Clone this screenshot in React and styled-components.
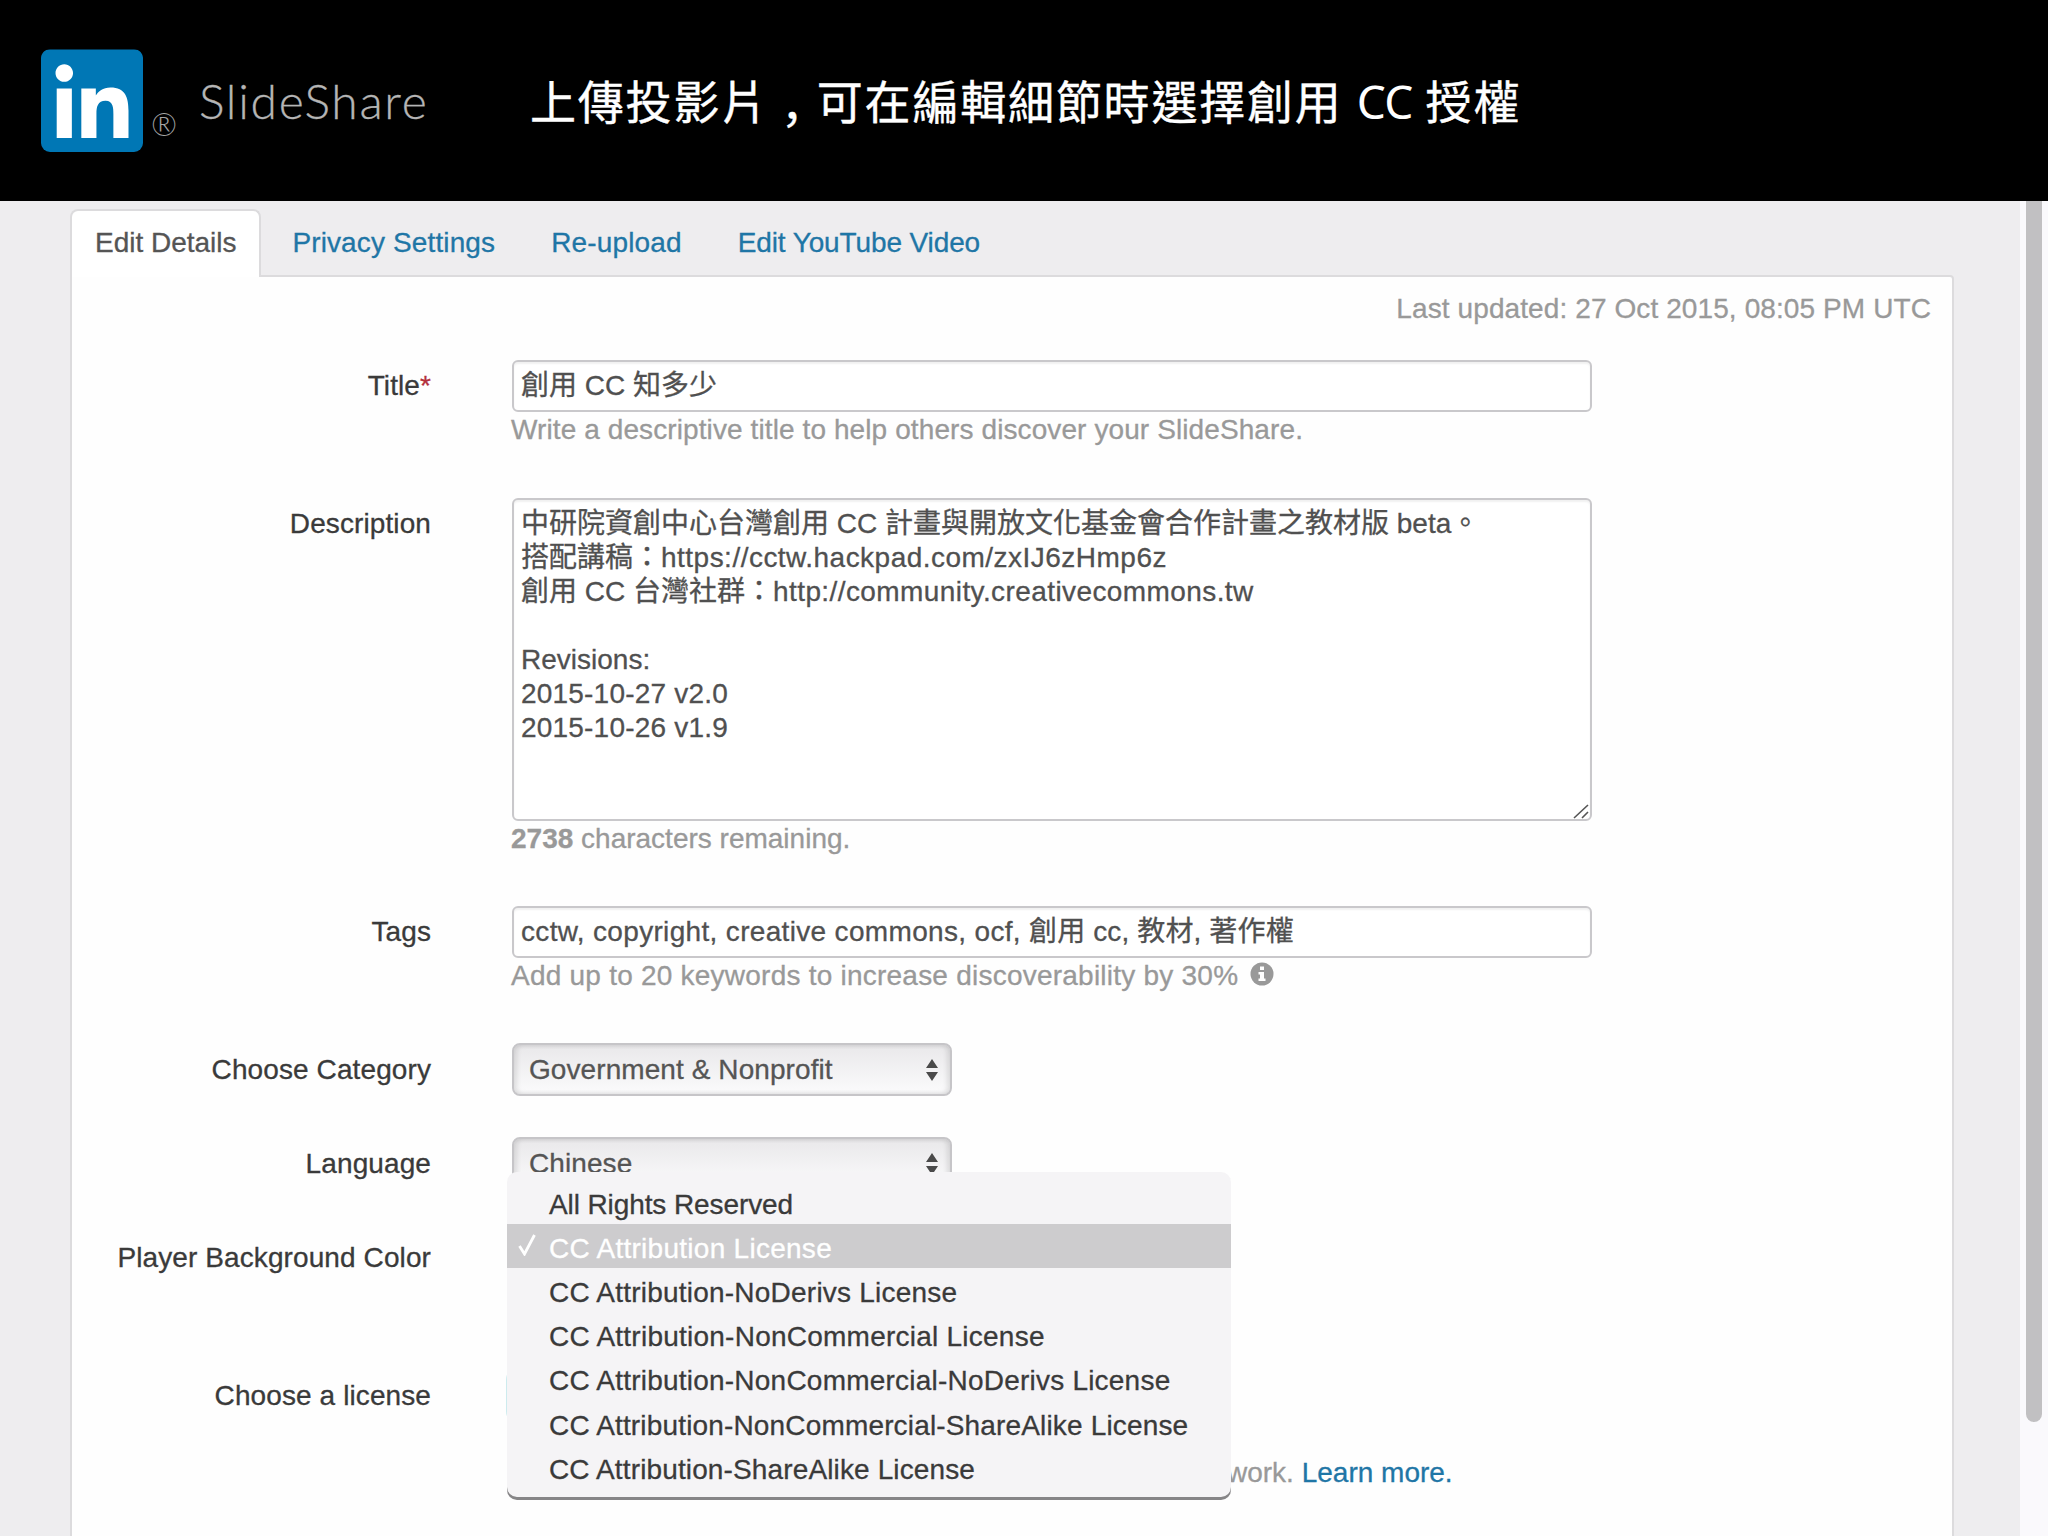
import React from "react";
import styled, { createGlobalStyle } from "styled-components";
import { FaLinkedin } from "react-icons/fa";

const GlobalStyle = createGlobalStyle`
  * {
    box-sizing: border-box;
  }

  body {
    margin: 0;
    overflow: hidden;
    background-color: #eeedef;
    font-family: "Liberation Sans", "Noto Sans CJK TC", sans-serif;
    font-size: 28px;
    line-height: 34px;
    color: #3a3a3a;
    -webkit-text-stroke: 0.3px currentColor;
  }
`;

const Page = styled.div`
  display: flex;
  flex-direction: column;
  height: 1536px;
  overflow: hidden;
`;

const Header = styled.header`
  display: flex;
  flex: none;
  align-items: flex-start;
  height: 201px;
  padding: 49px 0 0 41px;
  background-color: #000;
`;

const LogoMark = styled.div`
  display: flex;
  align-items: center;
  width: 102px;
  height: 103px;
  overflow: hidden;
  border-radius: 9px;
  background: linear-gradient(#fff, #fff) center / 84% 84% no-repeat;

  svg {
    flex: none;
    width: 102px;
    height: 118px;
    color: #0077b5;
  }
`;

const Registered = styled.span`
  margin: 58px 0 0 8px;
  width: 25px;
  font-family: Lato, sans-serif;
  font-weight: 300;
  font-size: 31px;
  line-height: 34px;
  color: #a5a5a5;
  -webkit-text-stroke: 0;
`;

const Brand = styled.span`
  width: 330px;
  margin: 22px 0 0 23px;
  font-family: Lato, sans-serif;
  font-weight: 300;
  font-size: 48px;
  line-height: 60px;
  letter-spacing: 1.7px;
  color: #b5b5b5;
`;

const Heading = styled.h1`
  margin: 22px 0 0 1px;
  font-family: "Noto Sans", "Noto Sans CJK TC", sans-serif;
  font-weight: 400;
  font-size: 46px;
  line-height: 60px;
  letter-spacing: 1.8px;
  white-space: nowrap;
  color: #fff;
  -webkit-text-stroke: 0.4px #fff;
`;

const Comma = styled.span`
  vertical-align: -17px;
  line-height: 0;
`;

const Latin = styled.span`
  margin: 0 2px 0 3px;
  letter-spacing: -0.8px;
  -webkit-text-stroke: 0;
`;

const Browser = styled.div`
  display: flex;
  flex: 1;
  min-height: 0;
`;

const Content = styled.main`
  flex: 1;
  padding: 8px 66px 0 70px;
`;

const Tabs = styled.nav`
  display: flex;
  gap: 6px;
  height: 66px;
`;

const Tab = styled.a`
  position: relative;
  z-index: 1;
  height: 68px;
  padding: 15px 23px 0;
  border: 2px solid ${({ $active }) => ($active ? "#dcdbdd" : "transparent")};
  border-bottom: 0;
  border-radius: 8px 8px 0 0;
  background-color: ${({ $active }) => ($active ? "#fff" : "transparent")};
  letter-spacing: ${({ $tracking }) => $tracking}px;
  color: ${({ $active }) => ($active ? "#555" : "#1f76a6")};
`;

const Panel = styled.section`
  height: 1400px;
  padding: 15px 21px 0 1px;
  border: 2px solid #dcdbdd;
  border-radius: 0 4px 0 0;
  background-color: #fefefe;
`;

const Updated = styled.p`
  margin: 0;
  text-align: right;
  letter-spacing: 0.1px;
  color: #999;
`;

const Row = styled.div`
  display: flex;
  align-items: flex-start;
  margin-top: ${({ $gap }) => $gap}px;
  min-height: ${({ $height }) => ($height ? `${$height}px` : "0")};
`;

const Label = styled.label`
  width: 358px;
  padding-top: ${({ $select }) => ($select ? 10 : 9)}px;
  margin-right: 81px;
  text-align: right;
  letter-spacing: 0.1px;
`;

const Required = styled.span`
  color: #b3303c;
`;

const Field = styled.div`
  position: relative;
  width: 1080px;
`;

const TextBox = styled.div`
  position: relative;
  height: ${({ $height }) => $height || 52}px;
  padding: 7px;
  border: 2px solid #c9c8cb;
  border-radius: 6px;
  background-color: #fff;
  box-shadow: inset 0 2px 2px rgba(0, 0, 0, 0.06);
  white-space: pre-wrap;
  color: #505050;
`;

const Tracked = styled.span`
  letter-spacing: ${({ $by }) => $by}px;
`;

const Grip = styled.svg`
  position: absolute;
  right: 1px;
  bottom: 0;
`;

const Hint = styled.p`
  display: flex;
  align-items: center;
  margin: 0 0 0 -1px;
  padding-top: 1px;
  height: 34px;
  white-space: pre;
  letter-spacing: ${({ $tracking }) => $tracking || 0}px;
  color: #999;
`;

const InfoIcon = styled.svg`
  margin: -4px 0 0 12px;
`;

const SelectBox = styled.div`
  display: flex;
  justify-content: space-between;
  width: 440px;
  height: 53px;
  padding: 8px 12px 0 15px;
  border: 2px solid #c6c5c8;
  border-radius: 8px;
  background: linear-gradient(#e9e8ea, #fbfbfc);
  box-shadow: inset 3px 0 5px rgba(0, 0, 0, 0.1),
    inset -3px 0 5px rgba(0, 0, 0, 0.1);
  letter-spacing: 0.08px;
  color: #555;

  svg {
    margin-top: 6px;
  }
`;

const FocusedSelect = styled(SelectBox)`
  height: 47px;
  margin: 3px 0;
  box-shadow: 0 0 0 6px #cdebee;
`;

const Menu = styled.ul`
  position: absolute;
  left: -5px;
  top: -197px;
  width: 724px;
  margin: 0;
  padding: 8px 0 11px;
  list-style: none;
  border-radius: 10px;
  background-color: #f5f4f6;
  box-shadow: inset 0 -3px 0 #868587;
`;

const MenuItem = styled.li`
  display: flex;
  align-items: center;
  height: 44.2px;
  padding: 5px 0 0 11px;
  letter-spacing: ${({ $tracking }) => $tracking}px;
  background-color: ${({ $selected }) => ($selected ? "#cdccce" : "transparent")};
  color: ${({ $selected }) => ($selected ? "#fff" : "#3a3a3a")};
`;

const CheckSlot = styled.span`
  display: flex;
  width: 31px;
  margin-top: -7px;
`;

const LearnMore = styled.a`
  color: #1f76a6;
`;

const LicenseHint = styled(Hint)`
  margin-top: 36px;
  padding-left: 716px;
`;

const Scrollbar = styled.div`
  width: 28px;
  padding-left: 6px;
  background-color: #faf9fc;
`;

const Thumb = styled.div`
  width: 16px;
  height: 1221px;
  border-radius: 0 0 8px 8px;
  background-color: #c1c0c2;
`;

const TABS = [
  { name: "Edit Details", tracking: -0.02 },
  { name: "Privacy Settings", tracking: 0.13 },
  { name: "Re-upload", tracking: 0.15 },
  { name: "Edit YouTube Video", tracking: -0.12 },
];

const LICENSES = [
  { name: "All Rights Reserved", tracking: -0.1 },
  { name: "CC Attribution License", tracking: 0.27 },
  { name: "CC Attribution-NoDerivs License", tracking: 0.22 },
  { name: "CC Attribution-NonCommercial License", tracking: 0.24 },
  { name: "CC Attribution-NonCommercial-NoDerivs License", tracking: 0.22 },
  { name: "CC Attribution-NonCommercial-ShareAlike License", tracking: 0.16 },
  { name: "CC Attribution-ShareAlike License", tracking: 0.13 },
];

function Select({ value }) {
  return (
    <SelectBox>
      {value}
      <svg width="12" height="22" viewBox="0 0 12 22" fill="#4a4a4a">
        <path d="M6 0l6 9H0zM0 13h12l-6 9z" />
      </svg>
    </SelectBox>
  );
}

function LicenseMenu({ selected }) {
  return (
    <Menu>
      {LICENSES.map(({ name, tracking }) => (
        <MenuItem key={name} $selected={name === selected} $tracking={tracking}>
          <CheckSlot>
            {name === selected && (
              <svg width="18" height="22" viewBox="0 0 18 22" fill="none">
                <path d="M1.5 12l5 8L16.500 1" stroke="#fff" strokeWidth="2.8" />
              </svg>
            )}
          </CheckSlot>
          {name}
        </MenuItem>
      ))}
    </Menu>
  );
}

function App() {
  return (
    <Page>
      <GlobalStyle />
      <Header>
        <LogoMark>
          <FaLinkedin preserveAspectRatio="none" />
        </LogoMark>
        <Registered>®</Registered>
        <Brand>SlideShare</Brand>
        <Heading>
          上傳投影片<Comma>，</Comma>可在編輯細節時選擇創用
          <Latin> CC </Latin>
          授權
        </Heading>
      </Header>
      <Browser>
        <Content>
          <Tabs>
            {TABS.map(({ name, tracking }, i) => (
              <Tab key={name} $active={i === 0} $tracking={tracking}>
                {name}
              </Tab>
            ))}
          </Tabs>
          <Panel>
            <Updated>Last updated: 27 Oct 2015, 08:05 PM UTC</Updated>
            <Row $gap={34}>
              <Label>
                Title<Required>*</Required>
              </Label>
              <Field>
                <TextBox>創用 CC 知多少</TextBox>
                <Hint $tracking={0.1}>
                  Write a descriptive title to help others discover your
                  SlideShare.
                </Hint>
              </Field>
            </Row>
            <Row $gap={52}>
              <Label>Description</Label>
              <Field>
                <TextBox $height={323}>
                  中研院資創中心台灣創用 CC 計畫與開放文化基金會合作計畫之教材版 beta。
                  {"\n搭配講稿："}
                  <Tracked $by={0.48}>https://cctw.hackpad.com/zxIJ6zHmp6z</Tracked>
                  {"\n創用 CC 台灣社群："}
                  <Tracked $by={0.41}>
                    http://community.creativecommons.tw
                  </Tracked>
                  {"\n\nRevisions:\n"}
                  <Tracked $by={0.2}>{"2015-10-27 v2.0\n2015-10-26 v1.9"}</Tracked>
                  <Grip width="17" height="16" viewBox="0 0 17 16">
                    <path
                      d="M2 15L16 2M10 15l6-6"
                      stroke="#555"
                      strokeWidth="1.6"
                    />
                  </Grip>
                </TextBox>
                <Hint>
                  <b>2738</b> characters remaining.
                </Hint>
              </Field>
            </Row>
            <Row $gap={51}>
              <Label>Tags</Label>
              <Field>
                <TextBox>
                  <Tracked $by={0.33}>
                    {"cctw, copyright, creative commons, ocf, "}
                  </Tracked>
                  <Tracked $by={0.13}>創用 cc, 教材, 著作權</Tracked>
                </TextBox>
                <Hint $tracking={0.23}>
                  Add up to 20 keywords to increase discoverability by 30%
                  <InfoIcon width="24" height="24" viewBox="0 0 24 24">
                    <circle cx="12" cy="12" r="11.500" fill="#999" />
                    <path
                      d="M10 4.500h4v3.500h-4zM8.500 10H14v6.500h1.500V19h-7v-2.500H10v-4H8.500z"
                      fill="#fff"
                    />
                  </InfoIcon>
                </Hint>
              </Field>
            </Row>
            <Row $gap={51}>
              <Label $select>Choose Category</Label>
              <Field>
                <Select value="Government & Nonprofit" />
              </Field>
            </Row>
            <Row $gap={41}>
              <Label $select>Language</Label>
              <Field>
                <Select value="Chinese" />
              </Field>
            </Row>
            <Row $gap={42} $height={95}>
              <Label>Player Background Color</Label>
            </Row>
            <Row $gap={42}>
              <Label $select>Choose a license</Label>
              <Field>
                <FocusedSelect />
                <LicenseHint>
                  work. <LearnMore>Learn more.</LearnMore>
                </LicenseHint>
                <LicenseMenu selected="CC Attribution License" />
              </Field>
            </Row>
          </Panel>
        </Content>
        <Scrollbar>
          <Thumb />
        </Scrollbar>
      </Browser>
    </Page>
  );
}

export default App;
